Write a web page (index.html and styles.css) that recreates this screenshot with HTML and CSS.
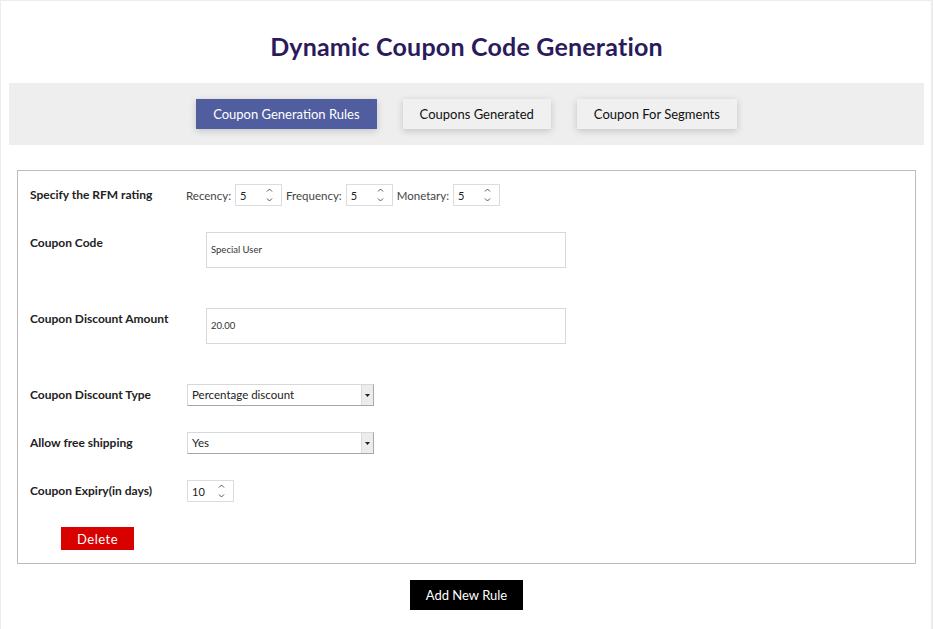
FILE: index.html
```html
<!DOCTYPE html>
<html>
<head>
<meta charset="utf-8">
<link rel="stylesheet" href="styles.css">
</head>
<body>
<div class="page">
  <h1 class="title">Dynamic Coupon Code Generation</h1>
  <div class="tabbar">
    <div class="tab active">Coupon Generation Rules</div>
    <div class="tab">Coupons Generated</div>
    <div class="tab">Coupon For Segments</div>
  </div>
  <div class="rulebox">
    <div class="row row-rfm">
      <div class="label">Specify the RFM rating</div>
      <div class="field rfm">
        <span class="sublabel">Recency:</span>
        <div class="num"><span class="val">5</span><span class="spin"><svg width="7" height="16" viewBox="0 0 7 16"><path d="M1 4.5 L3.5 2 L6 4.5 M1 11.5 L3.5 14 L6 11.5" fill="none" stroke="#555" stroke-width="1"/></svg></span></div>
        <span class="sublabel">Frequency:</span>
        <div class="num"><span class="val">5</span><span class="spin"><svg width="7" height="16" viewBox="0 0 7 16"><path d="M1 4.5 L3.5 2 L6 4.5 M1 11.5 L3.5 14 L6 11.5" fill="none" stroke="#555" stroke-width="1"/></svg></span></div>
        <span class="sublabel">Monetary:</span>
        <div class="num"><span class="val">5</span><span class="spin"><svg width="7" height="16" viewBox="0 0 7 16"><path d="M1 4.5 L3.5 2 L6 4.5 M1 11.5 L3.5 14 L6 11.5" fill="none" stroke="#555" stroke-width="1"/></svg></span></div>
      </div>
    </div>
    <div class="row row-text">
      <div class="label">Coupon Code</div>
      <div class="field"><div class="textbox">Special User</div></div>
    </div>
    <div class="row row-text">
      <div class="label">Coupon Discount Amount</div>
      <div class="field"><div class="textbox">20.00</div></div>
    </div>
    <div class="row row-sel">
      <div class="label">Coupon Discount Type</div>
      <div class="field"><div class="select"><span class="selval">Percentage discount</span><span class="arrow"><svg width="5" height="3" viewBox="0 0 5 3"><path d="M0 0 H5 L2.5 3 Z" fill="#222"/></svg></span></div></div>
    </div>
    <div class="row row-sel">
      <div class="label">Allow free shipping</div>
      <div class="field"><div class="select"><span class="selval">Yes</span><span class="arrow"><svg width="5" height="3" viewBox="0 0 5 3"><path d="M0 0 H5 L2.5 3 Z" fill="#222"/></svg></span></div></div>
    </div>
    <div class="row row-exp">
      <div class="label">Coupon Expiry(in days)</div>
      <div class="field"><div class="num"><span class="val">10</span><span class="spin"><svg width="7" height="16" viewBox="0 0 7 16"><path d="M1 4.5 L3.5 2 L6 4.5 M1 11.5 L3.5 14 L6 11.5" fill="none" stroke="#555" stroke-width="1"/></svg></span></div></div>
    </div>
    <div class="actions">
      <button class="btn-delete">Delete</button>
    </div>
  </div>
  <div class="footer">
    <button class="btn-add">Add New Rule</button>
  </div>
</div>
</body>
</html>
```
FILE: styles.css
```css
* { box-sizing: border-box; }
html, body { margin: 0; padding: 0; background: #fff; }
body { font-family: "Lato", "Open Sans", sans-serif; color: #222; }

.page {
  width: 933px;
  min-height: 629px;
  border: 1px solid #ececec;
  border-bottom: none;
  border-right-width: 2px;
  padding: 0 7px 0 8px;
}

.title {
  margin: 0;
  padding-top: 30px;
  height: 82px;
  font-size: 25px;
  line-height: 30px;
  font-weight: 700;
  color: #2b1a5c;
  text-align: center;
  letter-spacing: 0.2px;
}

.tabbar {
  background: #eeeeee;
  height: 62px;
  display: flex;
  justify-content: center;
  align-items: flex-start;
  gap: 26px;
  padding-top: 16px;
}

.tab {
  height: 30px;
  line-height: 30px;
  padding: 0 17px;
  font-size: 13px;
  color: #111;
  background: #f0f0f0;
  box-shadow: 0 2px 7px rgba(0,0,0,0.18);
}
.tab.active {
  background: #505d9e;
  color: #fff;
}

.rulebox {
  margin: 25px 8px 0;
  border: 1px solid #bcbcbc;
  padding: 13px 12px 12px;
  height: 394px;
}

.row {
  display: flex;
  align-items: flex-start;
}
.row-rfm { height: 48px; }
.row-text { height: 76px; }
.row-sel { height: 48px; }
.row-exp { height: 47px; }

.label {
  width: 157px;
  flex: none;
  font-size: 12px;
  font-weight: 700;
  line-height: 22px;
  color: #222;
}

.field { display: flex; align-items: center; }
.rfm { gap: 4px; margin-left: -1px; }
.sublabel { font-size: 11.5px; color: #444; }

.num {
  width: 47px;
  height: 22px;
  border: 1px solid #dcdcdc;
  display: flex;
  align-items: center;
  justify-content: space-between;
  padding: 0 8px 0 4px;
  background: #fff;
}
.val { font-size: 11px; color: #222; }
.spin { display: flex; align-items: center; }

.row-text .field { padding-left: 19px; }
.textbox {
  width: 360px;
  height: 36px;
  border: 1px solid #d8d8d8;
  padding: 0 4px;
  font-size: 9.5px;
  line-height: 34px;
  color: #333;
}

.select {
  width: 187px;
  height: 22px;
  border: 1px solid #d8d8d8;
  border-right-color: #a8a8a8;
  border-bottom-color: #a8a8a8;
  display: flex;
  align-items: stretch;
}
.selval {
  flex: 1;
  font-size: 11.5px;
  line-height: 20px;
  padding-left: 4px;
  color: #222;
}
.arrow {
  width: 12px;
  background: #ececec;
  border-left: 1px solid #dcdcdc;
  display: flex;
  align-items: center;
  justify-content: center;
}

.actions { padding-left: 31px; }
.btn-delete {
  border: none;
  background: #d90000;
  color: #fff;
  font-family: inherit;
  font-size: 13px;
  width: 73px;
  height: 23px;
  padding: 0;
  letter-spacing: 0.5px;
}

.footer {
  display: flex;
  justify-content: center;
  padding-top: 16px;
}
.btn-add {
  border: none;
  background: #000;
  color: #fff;
  font-family: inherit;
  font-size: 13px;
  width: 113px;
  height: 30px;
  padding: 0;
}
```
